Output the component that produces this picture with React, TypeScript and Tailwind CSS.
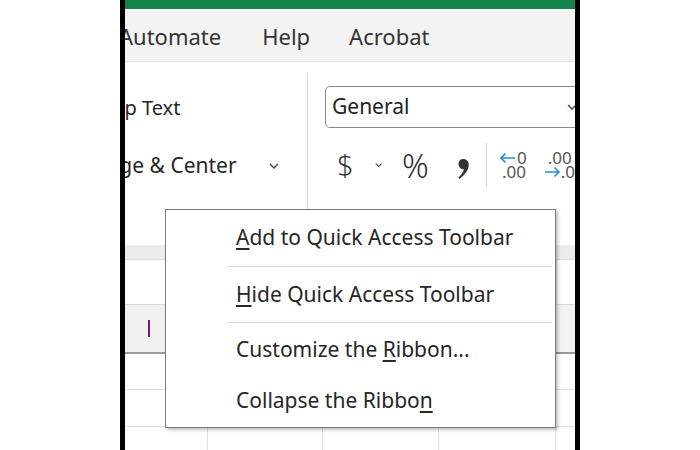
import React from 'react';

const font = { fontFamily: '"Noto Sans", "Open Sans", Arial, sans-serif' };

const Chevron = ({ className = '' }: { className?: string }) => (
  <svg className={className} width="10" height="6" viewBox="0 0 10 6" fill="none">
    <path d="M1 1l4 4 4-4" stroke="#444" strokeWidth="1.4" />
  </svg>
);

const U = ({ children }: { children: React.ReactNode }) => (
  <span className="underline underline-offset-[3px] decoration-[1.5px]">{children}</span>
);

const ContextMenu = () => (
  <div className="absolute left-[40px] top-[209px] w-[391px] border border-[#7a7a7a] bg-white shadow-[2px_2px_3px_rgba(0,0,0,0.25)] text-[21px] text-[#262626]">
    <div className="h-[56px] flex items-center pl-[70px]">
      <span><U>A</U>dd to Quick Access Toolbar</span>
    </div>
    <div className="ml-[61px] mr-[3px] h-px bg-[#d6d6d6]" />
    <div className="h-[55px] flex items-center pl-[70px]">
      <span><U>H</U>ide Quick Access Toolbar</span>
    </div>
    <div className="ml-[61px] mr-[3px] h-px bg-[#d6d6d6]" />
    <div className="h-[54px] flex items-center pl-[70px]">
      <span>Customize the <U>R</U>ibbon...</span>
    </div>
    <div className="h-[50px] flex items-center pl-[70px] pb-[2px]">
      <span>Collapse the Ribbo<U>n</U></span>
    </div>
  </div>
);

const GridRow = ({ h, last = false }: { h: string; last?: boolean }) => (
  <div className={`flex shrink-0 ${h} ${last ? '' : 'border-b border-[#e1e1e1]'}`}>
    <div className="w-[83px] border-r border-[#e1e1e1]" />
    <div className="w-[115px] border-r border-[#e1e1e1]" />
    <div className="w-[116px] border-r border-[#e1e1e1]" />
    <div className="w-[117px] border-r border-[#e1e1e1]" />
    <div className="flex-1" />
  </div>
);

export default function App() {
  return (
    <div className="w-[700px] h-[450px] bg-white flex overflow-hidden" style={font}>
      <div className="w-[120px] shrink-0" />
      <div className="w-[5px] shrink-0 bg-black" />
      <div className="w-[450px] shrink-0 relative flex flex-col overflow-hidden">
        <div className="h-[9px] shrink-0 bg-[#14834b]" />
        {/* Tabs */}
        <div className="h-[53px] shrink-0 bg-[#f3f3f3] border-b border-[#e3e3e3] flex items-center pt-[2px] text-[22px] text-[#333] overflow-hidden">
          <span className="ml-[-6px]">Automate</span>
          <span className="ml-[41px]">Help</span>
          <span className="ml-[39px]">Acrobat</span>
        </div>
        {/* Ribbon */}
        <div className="h-[183px] shrink-0 bg-white flex text-[#262626]">
          <div className="w-[183px] border-r border-[#d9d9d9] mt-[11px] flex flex-col overflow-hidden">
            <div className="h-[70px] flex items-center text-[20px] whitespace-nowrap">
              <span className="ml-[-38px]">Wrap Text</span>
            </div>
            <div className="h-[46px] flex items-center text-[21px] whitespace-nowrap">
              <span className="ml-[-45px]">Merge &amp; Center</span>
              <Chevron className="ml-[32px]" />
            </div>
          </div>
          <div className="flex-1 pl-[17px] pt-[24px] overflow-hidden">
            <div className="h-[42px] w-[260px] border border-[#8a8a8a] rounded-[5px] flex items-center justify-between pl-[6px] pr-[7px] text-[21px] text-[#222]">
              <span>General</span>
              <Chevron />
            </div>
            <div className="flex items-center h-[60px] mt-[7px] whitespace-nowrap">
              <span className="text-[29px] font-light text-[#333] ml-[12px]">$</span>
              <Chevron className="ml-[21px]" />
              <span className="text-[33px] font-light text-[#333] ml-[20px] leading-none">%</span>
              <svg className="ml-[28px] mt-[8px]" width="17" height="28" viewBox="0 0 17 28">
                <path d="M2 6.5C2 3 4.5 0.5 8.5 0.5S16 3.5 16 8c0 8-5.5 14-12.5 19.5L2 25.5c4-3.5 6.5-7 7.3-11C5 14.5 2 11 2 6.5z" fill="#333" />
              </svg>
              <div className="ml-[17px] w-px h-[44px] bg-[#d4d4d4]" />
              <div className="ml-[12px] flex flex-col leading-[14px] text-[17px] text-[#555]">
                <div className="flex items-center">
                  <svg width="17" height="12" viewBox="0 0 17 12">
                    <path d="M16 6H2M6.5 1.5L2 6l4.5 4.5" stroke="#2b88d8" strokeWidth="1.6" fill="none" />
                  </svg>
                  <span className="ml-[1px]">0</span>
                </div>
                <span className="ml-[3px]">.00</span>
              </div>
              <div className="ml-[17px] flex flex-col leading-[14px] text-[17px] text-[#555]">
                <span className="ml-[4px]">.00</span>
                <div className="flex items-center">
                  <svg width="17" height="12" viewBox="0 0 17 12">
                    <path d="M1 6h14M10.5 1.5L15 6l-4.5 4.5" stroke="#2b88d8" strokeWidth="1.6" fill="none" />
                  </svg>
                  <span>.0</span>
                </div>
              </div>
            </div>
          </div>
        </div>
        {/* Sheet */}
        <div className="h-[15px] shrink-0 bg-[#ececec] border-b border-[#dcdcdc]" />
        <div className="h-[45px] shrink-0 border-b border-[#d9d9d9] flex">
          <div className="w-[431px]" />
          <div className="flex-1 border-l border-[#e3e3e3]" />
        </div>
        <div className="h-[49px] shrink-0 bg-[#f1f1f1] border-b-2 border-[#9a9a9a] flex items-center">
          <div className="ml-[23px] w-[2px] h-[17px] bg-[#6b2570]" />
        </div>
        <GridRow h="h-[36px]" />
        <GridRow h="h-[37px]" />
        <GridRow h="h-[30px]" last />
        <ContextMenu />
      </div>
      <div className="w-[5px] shrink-0 bg-black" />
      <div className="flex-1" />
    </div>
  );
}
